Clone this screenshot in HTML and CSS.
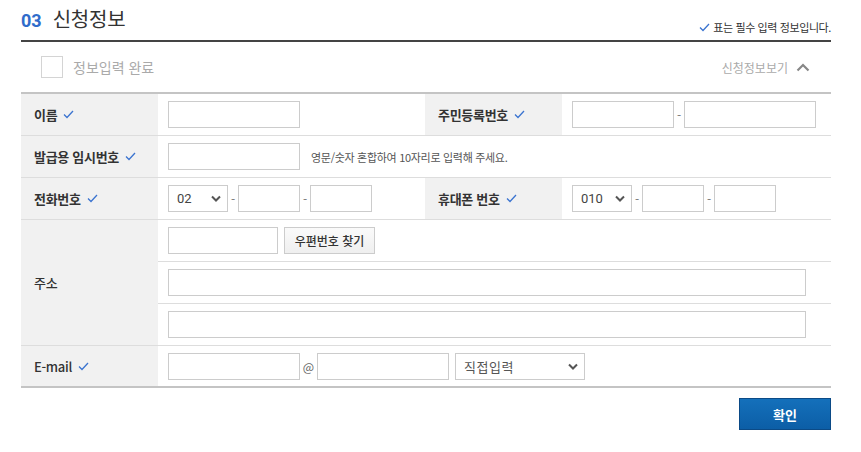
FILE: index.html
```html
<!DOCTYPE html>
<html lang="ko">
<head>
<meta charset="utf-8">
<link rel="stylesheet" href="styles.css">
</head>
<body>
<div class="wrap">
  <div class="head">
    <h2 class="title"><span class="num">03</span><span class="name">신청정보</span></h2>
    <p class="req"><svg class="chk" width="11" height="9" viewBox="0 0 11 9"><path d="M1 4.5 L4 7.5 L10 1" fill="none" stroke="#3b74d0" stroke-width="1.3"/></svg>표는 필수 입력 정보입니다.</p>
  </div>
  <div class="subbar">
    <label class="done"><span class="box"></span>정보입력 완료</label>
    <div class="toggle">신청정보보기 <svg width="14" height="9" viewBox="0 0 14 9"><path d="M1.5 7.5 L7 2 L12.5 7.5" fill="none" stroke="#888" stroke-width="2.2"/></svg></div>
  </div>

  <div class="form">
    <div class="lab">이름 <svg class="chk" width="11" height="9" viewBox="0 0 11 9"><path d="M1 4.5 L4 7.5 L10 1" fill="none" stroke="#3b74d0" stroke-width="1.3"/></svg></div>
    <div class="val"><input class="in w132" type="text"></div>
    <div class="lab">주민등록번호 <svg class="chk" width="11" height="9" viewBox="0 0 11 9"><path d="M1 4.5 L4 7.5 L10 1" fill="none" stroke="#3b74d0" stroke-width="1.3"/></svg></div>
    <div class="val"><input class="in w102" type="text"><span class="dash">-</span><input class="in w132" type="text"></div>

    <div class="lab">발급용 임시번호 <svg class="chk" width="11" height="9" viewBox="0 0 11 9"><path d="M1 4.5 L4 7.5 L10 1" fill="none" stroke="#3b74d0" stroke-width="1.3"/></svg></div>
    <div class="val span3"><input class="in w132" type="text"><span class="hint">영문/숫자 혼합하여 10자리로 입력해 주세요.</span></div>

    <div class="lab">전화번호 <svg class="chk" width="11" height="9" viewBox="0 0 11 9"><path d="M1 4.5 L4 7.5 L10 1" fill="none" stroke="#3b74d0" stroke-width="1.3"/></svg></div>
    <div class="val"><div class="sel w60"><span>02</span><svg width="10" height="7" viewBox="0 0 10 7"><path d="M1 1.5 L5 5.5 L9 1.5" fill="none" stroke="#555" stroke-width="2"/></svg></div><span class="dash">-</span><input class="in w62" type="text"><span class="dash">-</span><input class="in w62" type="text"></div>
    <div class="lab">휴대폰 번호 <svg class="chk" width="11" height="9" viewBox="0 0 11 9"><path d="M1 4.5 L4 7.5 L10 1" fill="none" stroke="#3b74d0" stroke-width="1.3"/></svg></div>
    <div class="val"><div class="sel w60"><span>010</span><svg width="10" height="7" viewBox="0 0 10 7"><path d="M1 1.5 L5 5.5 L9 1.5" fill="none" stroke="#555" stroke-width="2"/></svg></div><span class="dash">-</span><input class="in w62" type="text"><span class="dash">-</span><input class="in w62" type="text"></div>

    <div class="lab addr">주소</div>
    <div class="val span3 sub"><input class="in w110" type="text"><button class="zip" type="button">우편번호 찾기</button></div>
    <div class="val span3 sub"><input class="in wfull" type="text"></div>
    <div class="val span3 sub"><input class="in wfull" type="text"></div>

    <div class="lab last mail-lab">E-mail <svg class="chk" width="11" height="9" viewBox="0 0 11 9"><path d="M1 4.5 L4 7.5 L10 1" fill="none" stroke="#3b74d0" stroke-width="1.3"/></svg></div>
    <div class="val span3 last"><input class="in w132" type="text"><span class="at">@</span><input class="in w132" type="text"><div class="sel w130 mail"><span>직접입력</span><svg width="10" height="7" viewBox="0 0 10 7"><path d="M1 1.5 L5 5.5 L9 1.5" fill="none" stroke="#555" stroke-width="2"/></svg></div></div>
  </div>

  <div class="actions"><button class="ok" type="button">확인</button></div>
</div>
</body>
</html>
```
FILE: styles.css
```css
* { box-sizing: border-box; }
body {
  margin: 0;
  background: #fff;
  font-family: "Noto Sans CJK KR", "Noto Sans", sans-serif;
  color: #333;
}
.wrap {
  width: 810px;
  margin-left: 21px;
}
.head {
  height: 42px;
  border-bottom: 2px solid #444;
  display: flex;
  justify-content: space-between;
  align-items: flex-end;
}
.title {
  margin: 0 0 6px 0;
  font-size: 20px;
  font-weight: 400;
  line-height: 26px;
  color: #333;
  display: flex;
  align-items: baseline;
}
.title .num {
  font-family: "Roboto", "Noto Sans", sans-serif;
  font-weight: 700;
  font-size: 18px;
  color: #2f6ccb;
  margin-right: 11px;
}
.title .name { letter-spacing: -0.2px; }
.req {
  margin: 0 0 6px 0;
  font-size: 11px;
  line-height: 14px;
  color: #333;
  letter-spacing: -0.4px;
  display: flex;
  align-items: center;
}
.req .chk { margin-right: 3px; }
.subbar {
  height: 52px;
  border-bottom: 2px solid #c4c4c4;
  display: flex;
  justify-content: space-between;
  align-items: center;
  padding: 0 21px 0 20px;
}
.done {
  display: flex;
  align-items: center;
  font-size: 14px;
  color: #aaa;
}
.box {
  width: 22px;
  height: 22px;
  border: 1px solid #d4d4d4;
  margin-right: 10px;
  background: #fff;
}
.toggle {
  font-size: 12px;
  color: #aaa;
  display: flex;
  align-items: center;
  gap: 8px;
}
.form {
  display: grid;
  grid-template-columns: 137px 267px 137px 1fr;
  grid-auto-rows: 42px;
}
.lab {
  background: #f1f1f1;
  border-bottom: 1px solid #ddd;
  padding-left: 13px;
  display: flex;
  align-items: center;
  font-size: 13px;
  font-weight: 700;
  color: #333;
  letter-spacing: -0.3px;
}
.lab .chk { margin-left: 6px; }
.lab.addr {
  grid-row: span 3;
  font-weight: 500;
}
.lab.mail-lab { font-weight: 500; }
.val {
  border-bottom: 1px solid #ddd;
  padding-left: 10px;
  display: flex;
  align-items: center;
}
.span3 { grid-column: span 3; }
.lab.last, .val.last { border-bottom: 2px solid #c4c4c4; }
.in {
  height: 27px;
  border: 1px solid #ccc;
  background: #fff;
  padding: 0 6px;
  font: inherit;
  margin: 0;
}
.w62 { width: 62px; }
.w102 { width: 102px; }
.w110 { width: 110px; }
.w132 { width: 132px; }
.wfull { width: 638px; }
.dash {
  width: 10px;
  text-align: center;
  font-size: 12px;
  color: #777;
}
.at {
  width: 17px;
  text-align: center;
  font-size: 12px;
  color: #666;
}
.hint {
  margin-left: 11px;
  font-size: 11px;
  color: #555;
  letter-spacing: -0.3px;
}
.sel {
  position: relative;
  height: 27px;
  border: 1px solid #ccc;
  background: #fff;
  display: flex;
  align-items: center;
  justify-content: space-between;
  padding: 0 6px 0 8px;
  font-size: 13px;
  color: #444;
  font-family: "Roboto", "Noto Sans CJK KR", sans-serif;
}
.sel.w60 { width: 60px; }
.sel.w130 { width: 130px; }
.sel.mail {
  margin-left: 6px;
  font-family: "Noto Sans CJK KR", sans-serif;
  color: #555;
  letter-spacing: 0.5px;
}
.zip {
  margin-left: 6px;
  width: 91px;
  height: 27px;
  border: 1px solid #ccc;
  background: linear-gradient(#fafafa, #efefef);
  font: inherit;
  font-size: 12px;
  font-weight: 500;
  color: #333;
  padding: 0;
}
.actions {
  display: flex;
  justify-content: flex-end;
  padding-top: 10px;
}
.ok {
  width: 92px;
  height: 32px;
  border: 1px solid #0b4a86;
  background: linear-gradient(#1470bb, #0c5ea6);
  color: #fff;
  font: inherit;
  font-size: 13px;
  font-weight: 700;
  padding: 0;
}
```
